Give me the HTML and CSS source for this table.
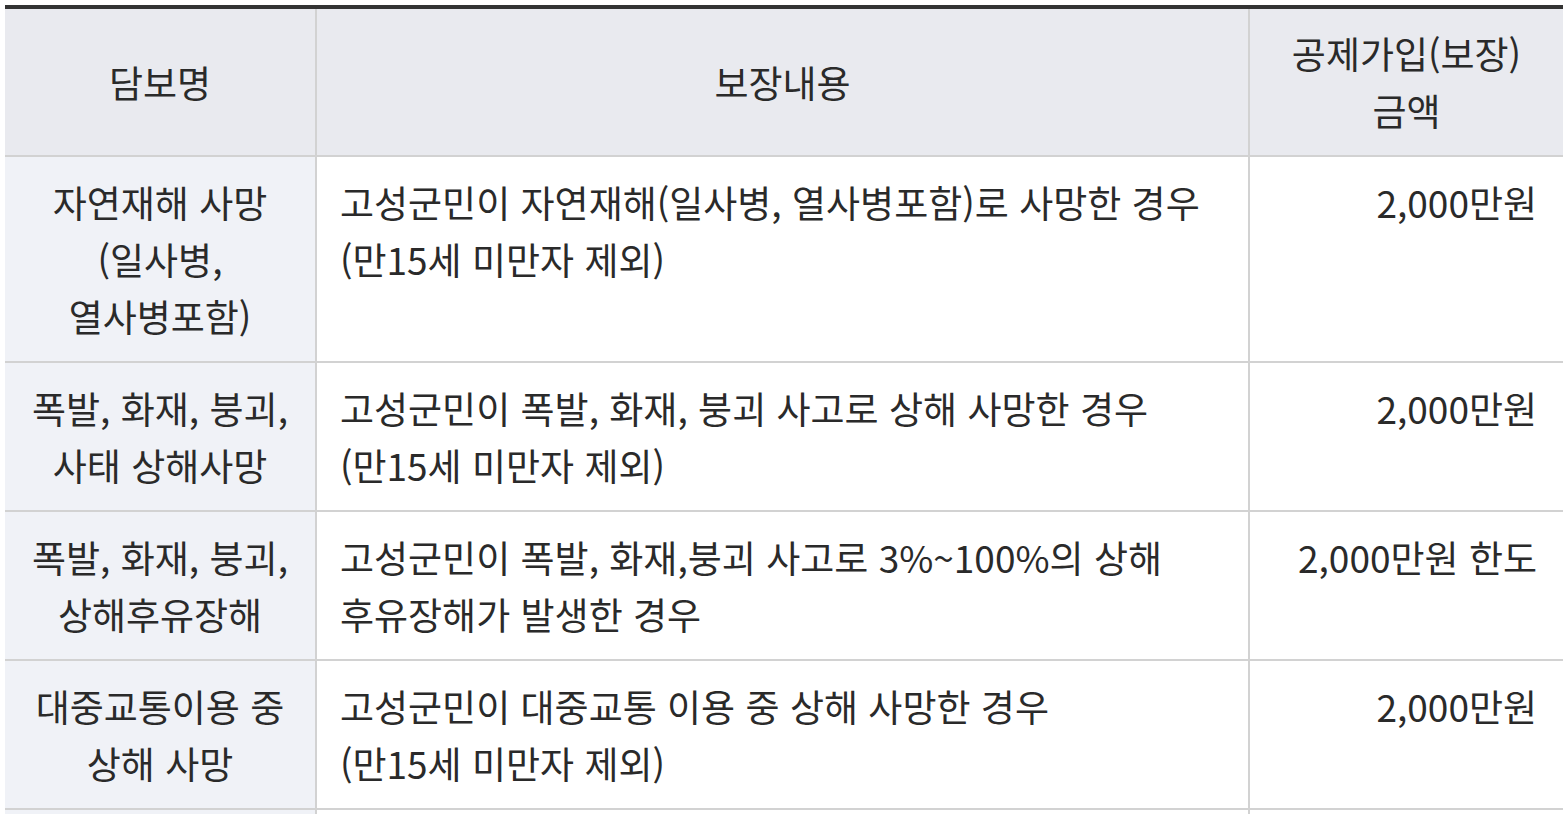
FILE: index.html
```html
<!DOCTYPE html>
<html lang="ko">
<head>
<meta charset="utf-8">
<title>공제 보장내용</title>
<link rel="stylesheet" href="styles.css">
</head>
<body>
<div class="wrap">
<table class="cover">
  <colgroup>
    <col class="c-name">
    <col class="c-desc">
    <col class="c-amt">
  </colgroup>
  <thead>
    <tr>
      <th>담보명</th>
      <th>보장내용</th>
      <th>공제가입(보장)<br>금액</th>
    </tr>
  </thead>
  <tbody>
    <tr>
      <td class="name">자연재해 사망<br>(일사병,<br>열사병포함)</td>
      <td class="desc">고성군민이 자연재해(일사병, 열사병포함)로 사망한 경우<br>(만15세 미만자 제외)</td>
      <td class="amt">2,000만원</td>
    </tr>
    <tr>
      <td class="name">폭발, 화재, 붕괴,<br>사태 상해사망</td>
      <td class="desc">고성군민이 폭발, 화재, 붕괴 사고로 상해 사망한 경우<br>(만15세 미만자 제외)</td>
      <td class="amt">2,000만원</td>
    </tr>
    <tr>
      <td class="name">폭발, 화재, 붕괴,<br>상해후유장해</td>
      <td class="desc">고성군민이 폭발, 화재,붕괴 사고로 3%~100%의 상해<br>후유장해가 발생한 경우</td>
      <td class="amt">2,000만원 한도</td>
    </tr>
    <tr>
      <td class="name">대중교통이용 중<br>상해 사망</td>
      <td class="desc">고성군민이 대중교통 이용 중 상해 사망한 경우<br>(만15세 미만자 제외)</td>
      <td class="amt">2,000만원</td>
    </tr>
    <tr class="more">
      <td class="name"></td>
      <td class="desc"></td>
      <td class="amt"></td>
    </tr>
  </tbody>
</table>
</div>
</body>
</html>
```

FILE: styles.css
```css
html, body {
  margin: 0;
  padding: 0;
  background: #ffffff;
}

.wrap {
  padding: 5px 0 0 5px;
  overflow: hidden;
}

.cover {
  width: 1558px;
  table-layout: fixed;
  border-collapse: collapse;
  border-top: 4px solid #333333;
  font-family: "Noto Sans CJK KR", "Noto Sans", sans-serif;
  font-size: 37px;
  line-height: 57px;
  color: #2a2a2a;
}

.c-name { width: 311px; }
.c-desc { width: 933px; }
.c-amt { width: 314px; }

.cover th,
.cover td {
  border: 2px solid #d2d2d2;
  padding: 17px 24px 16px;
  font-weight: 400;
}

.cover tr > :first-child { border-left: none; }
.cover tr > :last-child { border-right: none; }
.cover thead th { border-top: none; }

.cover th {
  background: #e9eaef;
  text-align: center;
  vertical-align: middle;
  padding: 16px 6px;
}

.cover td {
  vertical-align: top;
}

.cover td.name {
  background: #f0f2f7;
  text-align: center;
  padding-left: 4px;
  padding-right: 4px;
}

.cover td.desc {
  text-align: left;
  padding-left: 23px;
}

.cover td.amt {
  text-align: right;
  padding-right: 26px;
  white-space: nowrap;
}

.cover tr.more td {
  height: 57px;
}
```
